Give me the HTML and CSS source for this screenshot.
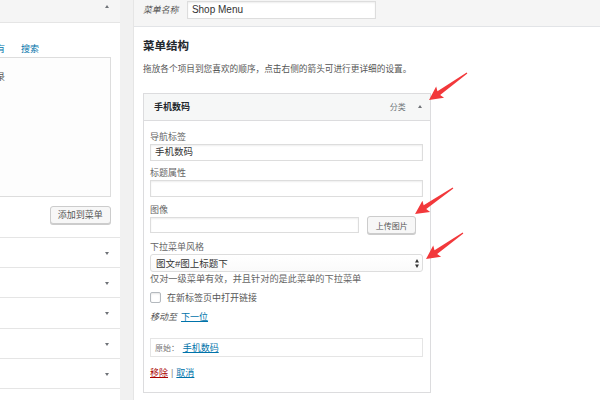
FILE: index.html
```html
<!DOCTYPE html>
<html lang="zh-CN">
<head>
<meta charset="utf-8">
<title>菜单</title>
<link rel="stylesheet" href="styles.css">
</head>
<body>
<div class="page">
  <aside class="side">
    <div class="side-head"><span class="tri-up"></span></div>
    <div class="side-body">
      <div class="tabs"><span class="tab">所有</span><span class="tab">搜索</span></div>
      <div class="listbox"><span class="cutword">记录</span></div>
      <div class="add-row"><span class="btn">添加到菜单</span></div>
    </div>
    <div class="acc"><span class="tri-down"></span></div>
    <div class="acc"><span class="tri-down"></span></div>
    <div class="acc"><span class="tri-down"></span></div>
    <div class="acc"><span class="tri-down"></span></div>
    <div class="acc"><span class="tri-down"></span></div>
    <div class="acc"></div>
  </aside>
  <main class="main">
    <div class="namebar">
      <span class="name-label">菜单名称</span>
      <span class="name-input">Shop Menu</span>
    </div>
    <div class="structure">
      <h2 class="title">菜单结构</h2>
      <p class="desc">拖放各个项目到您喜欢的顺序，点击右侧的箭头可进行更详细的设置。</p>
      <div class="item">
        <div class="item-head">
          <span class="item-title">手机数码</span>
          <span class="item-type">分类</span>
          <span class="tri-up"></span>
        </div>
        <div class="item-body">
          <div class="field">
            <span class="lbl">导航标签</span>
            <div class="inp">手机数码</div>
          </div>
          <div class="field">
            <span class="lbl">标题属性</span>
            <div class="inp"></div>
          </div>
          <div class="field">
            <span class="lbl">图像</span>
            <div class="img-row">
              <div class="inp img-inp"></div>
              <span class="btn upload">上传图片</span>
            </div>
          </div>
          <div class="field">
            <span class="lbl">下拉菜单风格</span>
            <div class="select">
              <span>图文#图上标题下</span>
              <svg class="sel-arrows" width="4" height="9" viewBox="0 0 4 9"><polygon points="0,3.6 2,0 4,3.6" fill="#333"/><polygon points="0,5.4 4,5.4 2,9" fill="#333"/></svg>
            </div>
          </div>
          <p class="hint">仅对一级菜单有效，并且针对的是此菜单的下拉菜单</p>
          <div class="check-row"><span class="checkbox"></span><span class="check-text">在新标签页中打开链接</span></div>
          <div class="move"><span class="move-label">移动至</span><a class="link">下一位</a></div>
          <div class="orig"><span class="orig-label">原始：</span><a class="link">手机数码</a></div>
          <div class="actions"><a class="remove">移除</a><span class="sep">|</span><a class="link">取消</a></div>
        </div>
      </div>
      <div class="item sub"></div>
    </div>
  </main>
</div>
<svg class="marks" width="600" height="400" viewBox="0 0 600 400">
  <g fill="#f2383b">
    <polygon transform="translate(467,73) rotate(144.6)" points="0,-0.6 34.6,-2.3 33,-6.8 46.6,0 33,6.8 34.6,2.3 0,0.6"/>
    <polygon transform="translate(453,188) rotate(145.6)" points="0,-0.6 34,-2.3 32.4,-6.8 46,0 32.4,6.8 34,2.3 0,0.6"/>
    <polygon transform="translate(463,233) rotate(144.9)" points="0,-0.6 33.2,-2.3 31.6,-6.8 45.2,0 31.6,6.8 33.2,2.3 0,0.6"/>
  </g>
</svg>
</body>
</html>
```
FILE: styles.css
```css
* { box-sizing: border-box; margin: 0; padding: 0; }
html, body { width: 600px; height: 400px; overflow: hidden; }
body {
  background: #f1f1f1;
  font-family: "Liberation Sans", "Noto Sans CJK SC", sans-serif;
  font-size: 9px;
  color: #444;
  position: relative;
}
a { text-decoration: none; cursor: pointer; }

.page { display: flex; gap: 13px; height: 400px; }

/* left column */
.side { width: 120px; flex: none; background: #fff; overflow: hidden; }
.side-head {
  height: 23px; background: #f5f5f5; border-bottom: 1px solid #e5e5e5;
  display: flex; justify-content: flex-end; align-items: flex-start;
  padding: 5px 11px 0 0;
}
.tri-up { width: 0; height: 0; border-left: 2.5px solid transparent; border-right: 2.5px solid transparent; border-bottom: 3.5px solid #6f7378; }
.tri-down { width: 0; height: 0; border-left: 2.5px solid transparent; border-right: 2.5px solid transparent; border-top: 3.5px solid #6f7378; }
.side-body { padding: 20px 0 12.4px 0; }
.tabs { display: flex; gap: 16px; height: 12px; line-height: 12px; color: #0073aa; margin-left: -13px; white-space: nowrap; }
.listbox {
  margin-top: 1.7px; margin-left: -2px; width: 112.7px; height: 140.6px;
  border: 1px solid #dddddd; background: #fdfdfd;
  padding-top: 13px; line-height: 12px; color: #555; white-space: nowrap;
}
.cutword { display: inline-block; margin-left: -12px; }
.add-row { display: flex; justify-content: flex-end; width: 110.7px; margin-top: 8.4px; }
.btn {
  display: inline-flex; align-items: center; justify-content: center;
  border: 1px solid #cccccc; border-radius: 3px; background: #f7f7f7;
  box-shadow: 0 1px 0 #cccccc; color: #555;
}
.add-row .btn { width: 61px; height: 18.6px; font-size: 9px; }
.acc {
  height: 30.3px; border-top: 1px solid #e5e5e5;
  display: flex; justify-content: flex-end; align-items: flex-start;
  padding: 14px 11px 0 0;
}

/* main column */
.main { flex: 1; background: #fff; border-left: 1px solid #e5e5e5; overflow: hidden; }
.namebar {
  height: 27px; background: #f5f5f5; border-bottom: 1px solid #e2e4e7;
  display: flex; align-items: flex-start; padding-left: 9px;
}
.name-label { font-style: italic; color: #555; font-size: 8.9px; line-height: 21px; margin-right: 8.4px; }
.name-input {
  width: 189px; height: 18.5px; margin-top: 0.5px;
  border: 1px solid #dddddd; background: #fff;
  box-shadow: inset 0 1px 2px rgba(0,0,0,.07);
  font-size: 10px; line-height: 16.5px; padding-left: 4px; color: #333;
}
.structure { padding: 12.2px 0 0 9px; }
.title { font-size: 11.5px; line-height: 15px; font-weight: 700; color: #23282d; }
.desc { margin-top: 9.3px; font-size: 8.66px; line-height: 13px; color: #555; white-space: nowrap; }

.item { margin-top: 16.2px; width: 288px; border: 1px solid #dcdcde; background: #fff; }
.item-head {
  height: 27.3px; background: #f6f7f7; border-bottom: 1px solid #dcdcde;
  display: flex; align-items: center; padding: 0 8.5px 0 10px;
}
.item-title { flex: 1; font-size: 9px; font-weight: 700; color: #23282d; }
.item-type { font-size: 8px; color: #72777c; margin-right: 11.8px; }
.item-body { padding: 9.7px 7.3px 11.2px 6px; }

.field + .field { margin-top: 6.5px; }
.lbl { display: block; height: 12px; line-height: 12px; font-size: 9px; color: #666; }
.inp {
  height: 16.7px; margin-top: 1.3px;
  border: 1px solid #dddddd; background: #fff;
  box-shadow: inset 0 1px 2px rgba(0,0,0,.07);
  font-size: 9.5px; line-height: 14.7px; padding-left: 4px; color: #333;
}
.img-row { display: flex; align-items: center; height: 17.6px; margin-top: 0.8px; }
.img-inp { width: 209.3px; height: 16px; margin-top: 0; }
.upload { width: 48.7px; height: 17.6px; margin-left: 8px; font-size: 8px; }
.select {
  display: flex; align-items: center; justify-content: space-between;
  height: 18px; margin-top: 1.6px;
  border: 1px solid #dddddd; border-radius: 3px;
  background: linear-gradient(#ffffff, #fafafa);
  padding: 0 3px 0 5px; font-size: 9.5px; color: #333;
}
.sel-arrows { display: block; }
.hint { margin-top: 1.2px; line-height: 13px; font-size: 9.2px; color: #666; white-space: nowrap; }
.check-row { display: flex; align-items: center; height: 13px; margin-top: 4.3px; }
.checkbox {
  width: 11px; height: 11px; border: 1px solid #b4b9be; border-radius: 2px;
  background: #fff; box-shadow: inset 0 1px 2px rgba(0,0,0,.1);
}
.check-text { margin-left: 6px; font-size: 9px; color: #555; }
.move { margin-top: 7px; line-height: 13px; height: 13px; }
.move-label { font-style: italic; color: #555; margin-right: 4px; }
.link { color: #0073aa; text-decoration: underline; }
.orig {
  display: flex; align-items: center; height: 19px; margin-top: 14px;
  border: 1px solid #e5e5e5; padding-left: 4px;
}
.orig-label { font-size: 8px; color: #777; margin-right: 3.7px; }
.actions { margin-top: 10.8px; line-height: 13px; height: 13px; }
.remove { color: #a00; text-decoration: underline; }
.sep { color: #888; margin: 0 3px; }
.item.sub { margin-top: 7.3px; margin-left: 20.3px; height: 30px; background: #f6f7f7; }

/* annotation arrows over the screenshot */
.marks { position: absolute; left: 0; top: 0; pointer-events: none; }
```
